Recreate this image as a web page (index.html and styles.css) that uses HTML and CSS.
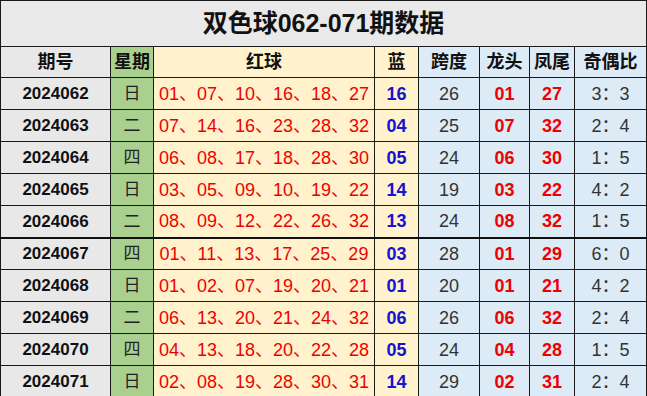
FILE: index.html
```html
<!DOCTYPE html>
<html lang="zh-CN">
<head>
<meta charset="utf-8">
<title>双色球062-071期数据</title>
<link rel="stylesheet" href="styles.css">
</head>
<body>
<table class="sheet">
  <colgroup>
    <col class="c-qh"><col class="c-xq"><col class="c-red"><col class="c-blue">
    <col class="c-kd"><col class="c-lt"><col class="c-fw"><col class="c-jo">
  </colgroup>
  <tr class="title-row"><td colspan="8" class="title">双色球062-071期数据</td></tr>
  <tr class="head-row">
    <th class="qh">期号</th><th class="xq">星期</th><th class="red-h">红球</th><th class="blue-h">蓝</th>
    <th class="lb">跨度</th><th class="lb">龙头</th><th class="lb">凤尾</th><th class="lb">奇偶比</th>
  </tr>
  <tr class="data-row"><td class="qh">2024062</td><td class="xq">日</td><td class="red">01、07、10、16、18、27</td><td class="blue">16</td><td class="kd">26</td><td class="lt">01</td><td class="lt">27</td><td class="jo">3：3</td></tr>
  <tr class="data-row"><td class="qh">2024063</td><td class="xq">二</td><td class="red">07、14、16、23、28、32</td><td class="blue">04</td><td class="kd">25</td><td class="lt">07</td><td class="lt">32</td><td class="jo">2：4</td></tr>
  <tr class="data-row"><td class="qh">2024064</td><td class="xq">四</td><td class="red">06、08、17、18、28、30</td><td class="blue">05</td><td class="kd">24</td><td class="lt">06</td><td class="lt">30</td><td class="jo">1：5</td></tr>
  <tr class="data-row"><td class="qh">2024065</td><td class="xq">日</td><td class="red">03、05、09、10、19、22</td><td class="blue">14</td><td class="kd">19</td><td class="lt">03</td><td class="lt">22</td><td class="jo">4：2</td></tr>
  <tr class="data-row split"><td class="qh">2024066</td><td class="xq">二</td><td class="red">08、09、12、22、26、32</td><td class="blue">13</td><td class="kd">24</td><td class="lt">08</td><td class="lt">32</td><td class="jo">1：5</td></tr>
  <tr class="data-row"><td class="qh">2024067</td><td class="xq">四</td><td class="red">01、11、13、17、25、29</td><td class="blue">03</td><td class="kd">28</td><td class="lt">01</td><td class="lt">29</td><td class="jo">6：0</td></tr>
  <tr class="data-row"><td class="qh">2024068</td><td class="xq">日</td><td class="red">01、02、07、19、20、21</td><td class="blue">01</td><td class="kd">20</td><td class="lt">01</td><td class="lt">21</td><td class="jo">4：2</td></tr>
  <tr class="data-row"><td class="qh">2024069</td><td class="xq">二</td><td class="red">06、13、20、21、24、32</td><td class="blue">06</td><td class="kd">26</td><td class="lt">06</td><td class="lt">32</td><td class="jo">2：4</td></tr>
  <tr class="data-row"><td class="qh">2024070</td><td class="xq">四</td><td class="red">04、13、18、20、22、28</td><td class="blue">05</td><td class="kd">24</td><td class="lt">04</td><td class="lt">28</td><td class="jo">1：5</td></tr>
  <tr class="data-row"><td class="qh">2024071</td><td class="xq">日</td><td class="red">02、08、19、28、30、31</td><td class="blue">14</td><td class="kd">29</td><td class="lt">02</td><td class="lt">31</td><td class="jo">2：4</td></tr>
</table>
</body>
</html>
```
FILE: styles.css
```css
html, body {
  margin: 0;
  padding: 0;
  background: #ffffff;
}
body {
  font-family: "Liberation Sans", "Noto Sans CJK SC", sans-serif;
  color: #111;
}
.sheet {
  border-collapse: collapse;
  table-layout: fixed;
  width: 646px;
}
.c-qh { width: 110px; }
.c-xq { width: 43px; }
.c-red { width: 221px; }
.c-blue { width: 44px; }
.c-kd { width: 61px; }
.c-lt { width: 50px; }
.c-fw { width: 45px; }
.c-jo { width: 72px; }

.sheet td, .sheet th {
  border: 1px solid #1a1a1a;
  padding: 0;
  text-align: center;
  vertical-align: middle;
  white-space: nowrap;
  overflow: hidden;
  line-height: 1;
}
.sheet .title-row { height: 46px; }
.sheet .head-row { height: 31px; }
.sheet .data-row { height: 32px; }

.title {
  background: #e9e9e9;
  font-size: 25px;
  font-weight: bold;
  color: #111;
}
.sheet th {
  font-size: 18px;
  font-weight: bold;
  color: #111;
}
.qh {
  background: #e8e8e8;
  font-size: 17px;
  font-weight: bold;
  color: #111;
}
.xq {
  background: #a9d08e;
  font-size: 17px;
  color: #222;
}
.red-h, .blue-h { background: #fff2cc; }
.red {
  background: #fff2cc;
  font-size: 18px;
  color: #ee0000;
}
.blue {
  background: #fff2cc;
  font-size: 18px;
  font-weight: bold;
  color: #1414d2;
}
.lb, .kd, .lt, .jo { background: #ddebf7; }
.kd {
  font-size: 18px;
  color: #333;
}
.lt {
  font-size: 18px;
  font-weight: bold;
  color: #ee0000;
}
.jo {
  font-size: 18px;
  color: #333;
}
.split td { border-bottom: 2px solid #111; }
```
